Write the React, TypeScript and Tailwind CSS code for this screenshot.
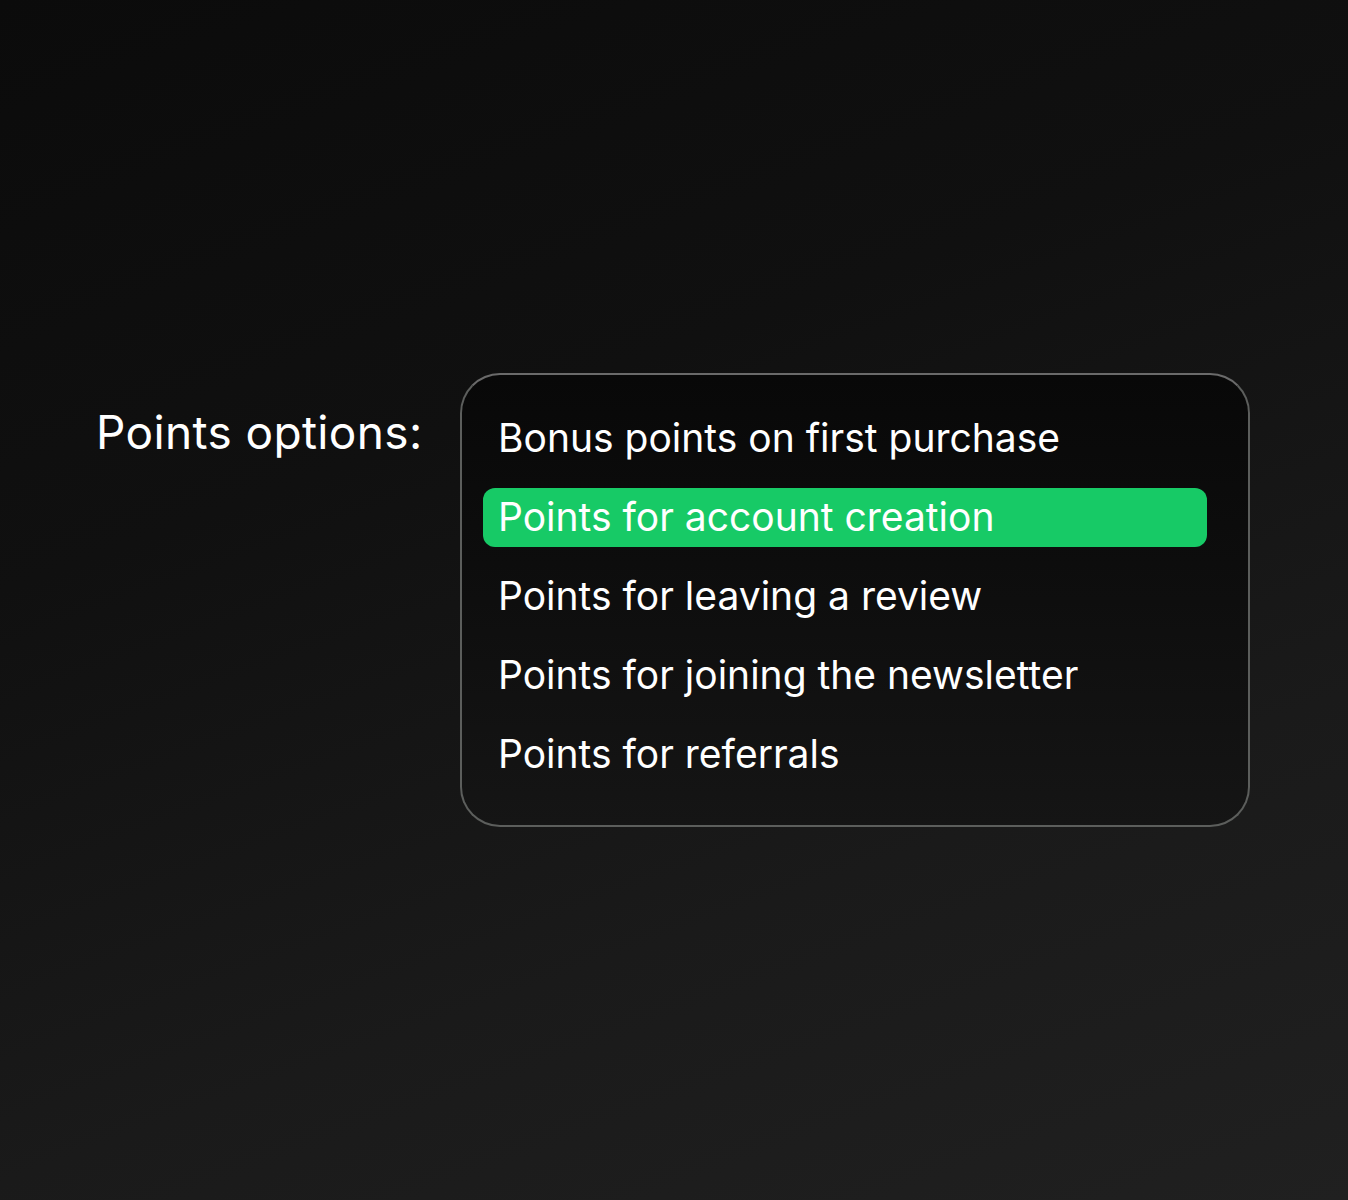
const OPTIONS = [
  { label: 'Bonus points on first purchase' },
  { label: 'Points for account creation', active: true },
  { label: 'Points for leaving a review' },
  { label: 'Points for joining the newsletter' },
  { label: 'Points for referrals' },
];

export default function App() {
  return (
    <div
      className="w-[1348px] h-[1200px] overflow-hidden bg-[linear-gradient(160deg,#0b0b0b_0%,#101010_35%,#1a1a1a_70%,#202020_100%)] text-white"
      style={{ fontFamily: 'Inter, "Noto Sans", sans-serif' }}
    >
      <div className="flex items-start pt-[373px] pl-[96px]">
        <h1 className="mt-[31px] w-[364px] text-[46px] leading-[56px] font-normal tracking-[0.008em]">
          Points options:
        </h1>
        <div className="w-[790px] h-[454px] rounded-[40px] border-2 border-[#5c5e5c] border-t-[#6a6a6a] bg-[linear-gradient(180deg,#080808_0%,#0e0e0e_50%,#151515_100%)] pt-[34px] pl-[21px] pr-[41px]">
          <ul className="flex flex-col gap-[20px]">
            {OPTIONS.map((o) => (
              <li
                key={o.label}
                className={
                  'h-[59px] rounded-[12px] pl-[15px] flex items-center text-[39px] ' +
                  (o.active ? 'bg-[#17ca66]' : '')
                }
              >
                {o.label}
              </li>
            ))}
          </ul>
        </div>
      </div>
    </div>
  );
}
